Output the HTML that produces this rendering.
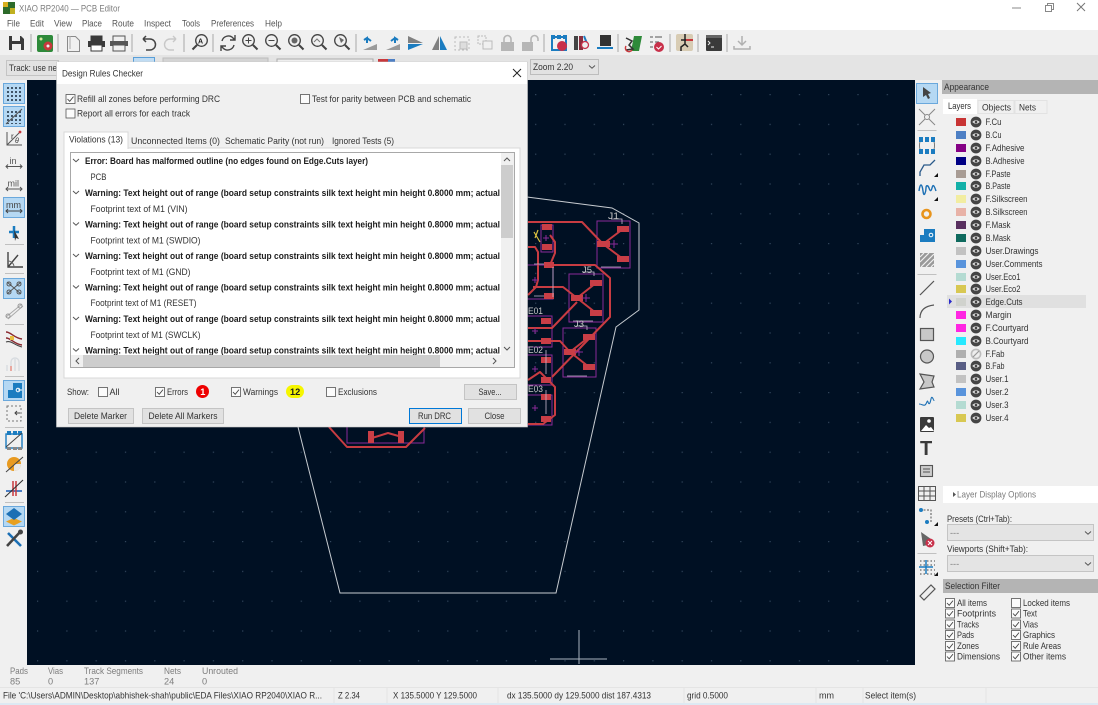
<!DOCTYPE html>
<html><head><meta charset="utf-8"><title>XIAO RP2040 — PCB Editor</title>
<style>
html,body{margin:0;padding:0;width:1098px;height:705px;overflow:hidden;background:#f0f0f0}
svg{display:block;position:absolute;left:0;top:0;filter:blur(.35px)}
text{font-family:"Liberation Sans",sans-serif;font-size:9.2px;fill:#333}
.b{font-weight:bold;fill:#1c1c1c}
.g{fill:#7d7d7d}
.sep{stroke:#a8a8a8;stroke-width:1}
.tr{fill:none;stroke:#c83c42;stroke-width:2;stroke-linejoin:round}
.pad{fill:#c93e46}
.cy{fill:none;stroke:#8a2a9a;stroke-width:1}
.btn{fill:#e1e1e1;stroke:#c4c4c4;stroke-width:1}
</style></head><body>
<svg width="1098" height="705" viewBox="0 0 1098 705" xmlns="http://www.w3.org/2000/svg">
<defs>
<pattern id="grid" x="37" y="94" width="29.3" height="29.8" patternUnits="userSpaceOnUse"><rect x="0" y="0" width="1.2" height="1.2" fill="#34485e"/></pattern>
<pattern id="dots" x="7" y="87" width="4" height="4" patternUnits="userSpaceOnUse"><rect width="2" height="2" fill="#3f5468"/></pattern>
<g id="eye"><circle r="5.4" fill="#454545"/><path d="M-3.8 0Q0-3.4 3.8 0Q0 3.4-3.8 0Z" fill="#e4e4e4"/><circle r="1.3" fill="#454545"/></g>
<g id="cb"><rect x=".5" y=".5" width="9" height="9" fill="#fbfbfb" stroke="#555" stroke-width=".8"/></g>
<g id="cc"><rect x=".5" y=".5" width="9" height="9" fill="#fbfbfb" stroke="#555" stroke-width=".8"/><path d="M2 5l2.2 2.3L8 2.6" fill="none" stroke="#444" stroke-width=".9"/></g>
<g id="mag"><circle cx="-1.5" cy="-1.5" r="5.8" fill="none" stroke="#444" stroke-width="1.3"/><path d="M3 3l4.500 4.500" stroke="#444" stroke-width="2"/></g>
<g id="chev"><path d="M-3-1.500L0 1.200 3-1.500" fill="none" stroke="#555" stroke-width="1"/></g>
<clipPath id="lc"><rect x="71" y="153" width="430" height="202"/></clipPath>
</defs>

<!-- window chrome -->
<rect width="1098" height="30" fill="#fff"/>
<rect y="30" width="1098" height="25" fill="#f0f0f0"/>
<rect y="55" width="1098" height="25" fill="#e4e4e4"/>
<rect x="3" y="2" width="12" height="12" fill="#2d6b2a"/><rect x="3" y="2" width="5" height="5" fill="#d8b020"/><rect x="10" y="8" width="5" height="6" fill="#c0b020"/>
<text x="19" y="11.500" class="g" textLength="101" lengthAdjust="spacingAndGlyphs">XIAO RP2040 — PCB Editor</text>
<path d="M1012 8h9" stroke="#888"/><rect x="1045.500" y="5.500" width="6" height="6" fill="none" stroke="#888"/><path d="M1047.500 5V3.500H1053.500V9.500H1052" fill="none" stroke="#888"/><path d="M1077 3l8 8M1085 3l-8 8" stroke="#777"/>
<text x="7" y="26.500" style="fill:#555" textLength="13" lengthAdjust="spacingAndGlyphs">File</text>
<text x="30" y="26.500" style="fill:#555" textLength="14" lengthAdjust="spacingAndGlyphs">Edit</text>
<text x="54" y="26.500" style="fill:#555" textLength="18" lengthAdjust="spacingAndGlyphs">View</text>
<text x="82" y="26.500" style="fill:#555" textLength="20" lengthAdjust="spacingAndGlyphs">Place</text>
<text x="112" y="26.500" style="fill:#555" textLength="22" lengthAdjust="spacingAndGlyphs">Route</text>
<text x="144" y="26.500" style="fill:#555" textLength="27" lengthAdjust="spacingAndGlyphs">Inspect</text>
<text x="182" y="26.500" style="fill:#555" textLength="18" lengthAdjust="spacingAndGlyphs">Tools</text>
<text x="211" y="26.500" style="fill:#555" textLength="43" lengthAdjust="spacingAndGlyphs">Preferences</text>
<text x="265" y="26.500" style="fill:#555" textLength="17" lengthAdjust="spacingAndGlyphs">Help</text>

<!-- top toolbar -->
<path d="M9 36h12l3 3v11H9z" fill="#3a3a3a"/><rect x="12" y="36" width="8" height="5" fill="#f0f0f0"/><rect x="12" y="44" width="9" height="6" fill="#f0f0f0"/>
<g class="sep"><path d="M31 34v18M58 34v18M132 34v18M184 34v18M213 34v18M356 34v18M544 34v18M618 34v18M670 34v18M698 34v18M727 34v18"/></g>
<rect x="37" y="35" width="16" height="17" rx="2" fill="#2e8a3a"/><circle cx="48" cy="46" r="4.500" fill="#c8383c"/><circle cx="48" cy="46" r="1.500" fill="#eee"/><circle cx="41" cy="39" r="1.500" fill="#d8e8a0"/>
<path d="M67.500 36.500h8l4 4v11h-12z" fill="none" stroke="#8a8a8a"/><path d="M70 36v13" stroke="#aaa"/>
<path d="M91 41v-5h11v5" fill="#3a3a3a" stroke="#3a3a3a"/><rect x="88" y="41" width="17" height="6" fill="#3a3a3a"/><rect x="91" y="45" width="11" height="6" fill="#fff" stroke="#3a3a3a"/>
<path d="M113 41v-5h12v5" fill="none" stroke="#555"/><rect x="110" y="41" width="18" height="5" fill="#555"/><rect x="113" y="45" width="12" height="6" fill="#f0f0f0" stroke="#555"/>
<path d="M143 39h7a4.500 4.500 0 0 1 0 11h-4M143 39l3-3M143 39l3 3" fill="none" stroke="#444" stroke-width="1.500"/>
<path d="M176 39h-6a4.500 4.500 0 0 0 0 11h4M176 39l-3-3M176 39l-3 3" fill="none" stroke="#c8c8c8" stroke-width="1.400"/>
<use href="#mag" transform="translate(200 42) scale(-1 1)"/><text x="198" y="43.500" style="font-size:7px" class="b">A</text>
<path d="M222 41a6.500 6.500 0 0 1 11-3l2 2M234 45a6.500 6.500 0 0 1-11 3l-2-2M235 35v5h-5M221 51v-5h5" fill="none" stroke="#444" stroke-width="1.400"/>
<use href="#mag" transform="translate(250 42)"/><path d="M245.500 40.500h6M248.500 37.500v6" stroke="#444"/>
<use href="#mag" transform="translate(273 42)"/><path d="M268.500 40.500h6" stroke="#444"/>
<use href="#mag" transform="translate(296 42)"/><circle cx="294.500" cy="40.500" r="3" fill="#666"/>
<use href="#mag" transform="translate(319 42)"/><path d="M314 42l3-3 3 3" fill="none" stroke="#777"/>
<use href="#mag" transform="translate(342 42)"/><path d="M339 37l2 6 3-3z" fill="#666"/>
<path d="M363 50l14-6v6z" fill="#9a9a9a"/><path d="M367 43v-5l-3 2M367 38l4 3" fill="none" stroke="#1b7cc0" stroke-width="2"/>
<path d="M386 50l14-6v6z" fill="#9a9a9a"/><path d="M395 43v-5l3 2M395 38l-4 3" fill="none" stroke="#1b7cc0" stroke-width="2"/>
<path d="M408 36l15 7h-15z" fill="#808080"/><path d="M408 44h15l-15 6z" fill="#1b7cc0"/>
<path d="M439 36v14h-7z" fill="#808080"/><path d="M440 36v14h7z" fill="#1b7cc0"/>
<rect x="455" y="37" width="14" height="13" fill="none" stroke="#bbb" stroke-dasharray="2 2"/><rect x="460" y="42" width="7" height="7" fill="#ddd" stroke="#bbb"/>
<rect x="478" y="36" width="8" height="8" fill="none" stroke="#bbb" stroke-dasharray="2 1"/><rect x="483" y="41" width="9" height="8" fill="#f0f0f0" stroke="#bbb"/>
<rect x="501" y="42" width="13" height="9" fill="#b6b6b6"/><path d="M504 42v-3a3.500 3.500 0 0 1 7 0v3" fill="none" stroke="#b6b6b6" stroke-width="1.600"/>
<rect x="522" y="42" width="11" height="9" fill="#b6b6b6"/><path d="M531 42v-3a3.500 3.500 0 0 1 7 0v2" fill="none" stroke="#b6b6b6" stroke-width="1.600"/>
<rect x="552" y="37" width="14" height="13" fill="none" stroke="#1b7cc0" stroke-width="2"/><rect x="551" y="35" width="4" height="4" fill="#1b7cc0"/><rect x="557" y="35" width="4" height="4" fill="#1b7cc0"/><rect x="563" y="35" width="4" height="4" fill="#1b7cc0"/><circle cx="562" cy="46" r="5" fill="#c8304a"/>
<rect x="574" y="36" width="4" height="14" fill="#444"/><rect x="579" y="36" width="4" height="14" fill="#8a3040"/><path d="M584 36l4 10" stroke="#1b7cc0" stroke-width="2"/><circle cx="585" cy="45" r="3.500" fill="#eee" stroke="#c8304a" stroke-width="1.300"/>
<rect x="600" y="35" width="11" height="11" fill="#333"/><rect x="597" y="47" width="16" height="2" fill="#1b7cc0"/>
<path d="M634 36h8l-3 15h-8z" fill="#2e8a3a"/><path d="M626 38l6 3-3 4 4 4-7 1" fill="none" stroke="#333" stroke-width="1.500"/><path d="M626 46a3 3 0 0 0 6 4" fill="none" stroke="#c8383c" stroke-width="1.500"/>
<path d="M650 37h3M650 42h3M650 47h3M655 37h7M655 42h4" stroke="#555"/><circle cx="659" cy="47" r="5" fill="#c8304a"/><path d="M656.500 47l2 2 3-3" fill="none" stroke="#fff"/>
<rect x="676" y="34" width="17" height="17" rx="2" fill="#d8ccb4"/><path d="M685 34v6M681 40h12M685 40v4l-4 3v4M685 44l3 3" stroke="#222" stroke-width="1.500" fill="none"/><path d="M686 40h7" stroke="#c8383c" stroke-width="2"/>
<rect x="706" y="35" width="16" height="16" rx="1" fill="#3a3a3a"/><rect x="706" y="35" width="16" height="3" fill="#666"/><path d="M708 41l2 2-2 2M711 47h3" stroke="#eee" fill="none"/>
<path d="M742 36v9M738 41l4 4 4-4M734 46v3h16v-3" fill="none" stroke="#b0b0b0" stroke-width="1.500"/>

<!-- second toolbar -->
<rect x="6.500" y="60.500" width="52" height="15" fill="#e2e2e2" stroke="#c4c4c4"/>
<text x="9" y="71" textLength="48" lengthAdjust="spacingAndGlyphs">Track: use ne</text>
<rect x="133.500" y="57.500" width="21" height="20" fill="#c0dcf3" stroke="#5a9fd8"/>
<rect x="163" y="58" width="105" height="10" fill="#d4d4d4" stroke="#bdbdbd"/>
<rect x="277" y="59" width="96" height="10" fill="#eee" stroke="#aaa"/>
<rect x="378" y="59" width="10" height="5" fill="#c8383c"/><rect x="388" y="59" width="7" height="5" fill="#4d7fc4"/>
<rect x="530.500" y="59.500" width="68" height="15" fill="#e2e2e2" stroke="#bdbdbd"/>
<text x="533" y="70" textLength="40" lengthAdjust="spacingAndGlyphs">Zoom 2.20</text>
<use href="#chev" transform="translate(592 67)"/>

<!-- canvas -->
<rect x="27" y="80" width="888" height="585" fill="#001023"/>
<rect x="27" y="80" width="888" height="585" fill="url(#grid)"/>
<path d="M527 197L612 208 639 223V310L616 327 556 593H340L298 427" fill="none" stroke="#c6cbd0" stroke-width="1"/>
<path d="M579 630V664M550 659H607" stroke="#aab4bf" stroke-width="1" fill="none"/>

<!-- PCB -->
<g class="cy">
<rect x="597" y="221" width="33" height="47"/><rect x="569" y="274" width="34" height="48"/><rect x="563" y="328" width="33" height="49"/>
<rect x="541" y="225" width="12" height="27"/><rect x="520" y="265" width="33" height="34"/>
<rect x="520" y="316" width="32" height="31"/><rect x="520" y="355" width="32" height="30"/><rect x="520" y="395" width="32" height="30"/>
<path d="M347 427V443H424V427"/>
</g>
<g class="tr">
<path d="M528 222H582L603 244 623 229M603 244L623 259"/>
<path d="M533 287H563L577 298 596 283M577 298L596 313M577 302L552 328H528"/>
<path d="M550 265H595L610 278V317L552 377"/>
<path d="M528 341H560L570 352 589 337M570 352L589 367"/>
<path d="M528 380L540 372 555 387V415L543 424H528"/>
<path d="M528 247H535L538 252V280L536 287 528 295"/><path d="M550 235L555 242V253L550 265"/>
<path d="M329 427L347 447H406L425 428"/><path d="M372 438L388 433 402 437"/>
</g>
<g class="pad">
<rect x="617" y="226" width="12" height="6"/><rect x="617" y="256" width="12" height="6"/><rect x="597" y="241" width="13" height="6"/>
<rect x="590" y="280" width="12" height="6"/><rect x="590" y="310" width="12" height="6"/><rect x="571" y="295" width="12" height="6"/>
<rect x="583" y="334" width="12" height="6"/><rect x="583" y="364" width="12" height="6"/><rect x="564" y="349" width="12" height="6"/>
<rect x="542" y="224" width="10" height="6"/><rect x="542" y="244" width="10" height="6"/><rect x="544" y="262" width="10" height="6"/><rect x="544" y="293" width="10" height="6"/>
<rect x="541" y="318" width="10" height="6"/><rect x="541" y="338" width="10" height="6"/><rect x="541" y="357" width="10" height="6"/><rect x="541" y="377" width="10" height="6"/><rect x="541" y="394" width="10" height="6"/><rect x="541" y="416" width="10" height="6"/>
<rect x="368" y="431" width="6" height="12"/><rect x="398" y="431" width="6" height="12"/>
</g>
<g fill="none" stroke="#c8b8cf" stroke-width=".8">
<path d="M611 219h11v5M583 272h11v4M576 326h11v4M553 267v30M534 264h10M534 296h10M601 267h20M573 321h20M567 376h20M546 350v24M546 390v24"/>
</g>
<path d="M534 232l6 10M538 230l-3 8" stroke="#d8c040" stroke-width="1.200" fill="none"/>
<text x="608" y="219" style="fill:#c8c8c8" textLength="11" lengthAdjust="spacingAndGlyphs">J1</text>
<text x="582" y="273" style="fill:#c8c8c8" textLength="10" lengthAdjust="spacingAndGlyphs">J5</text>
<text x="574" y="327" style="fill:#c8c8c8" textLength="10" lengthAdjust="spacingAndGlyphs">J3</text>
<text x="528" y="314" style="fill:#c8c8c8" textLength="15" lengthAdjust="spacingAndGlyphs">E01</text>
<text x="528" y="353" style="fill:#c8c8c8" textLength="15" lengthAdjust="spacingAndGlyphs">E02</text>
<text x="528" y="392" style="fill:#c8c8c8" textLength="15" lengthAdjust="spacingAndGlyphs">E03</text>
<g stroke="#8a2a9a" fill="none"><path d="M610 244h8M614 240v8M582 298h8M586 294v8M575 352h8M579 348v8M532 408h6M535 405v6M532 369h6M535 366v6M532 331h6M535 328v6M532 280h6M535 277v6M543 238h6M546 235v6"/></g>

<!-- dialog -->
<rect x="56.500" y="62" width="471" height="365" fill="#f0f0f0" stroke="#c8c8c8" stroke-width=".6"/>
<rect x="57" y="62" width="470" height="22" fill="#fff"/>
<text x="62" y="76.500" textLength="81" lengthAdjust="spacingAndGlyphs">Design Rules Checker</text>
<path d="M513 69l8 8M521 69l-8 8" stroke="#222" stroke-width="1"/>
<use href="#cc" x="65.500" y="94"/><text x="77" y="102" textLength="143" lengthAdjust="spacingAndGlyphs">Refill all zones before performing DRC</text>
<use href="#cb" x="65.500" y="108.500"/><text x="77" y="116.500" textLength="113" lengthAdjust="spacingAndGlyphs">Report all errors for each track</text>
<use href="#cb" x="300" y="94"/><text x="312" y="102" textLength="159" lengthAdjust="spacingAndGlyphs">Test for parity between PCB and schematic</text>

<rect x="64" y="148" width="456" height="230" fill="#fff" stroke="#d9d9d9"/>
<rect x="64" y="132" width="64" height="17" fill="#fff"/><path d="M64 149V132H128V149" fill="none" stroke="#d9d9d9"/>
<text x="69" y="142.500" textLength="54" lengthAdjust="spacingAndGlyphs">Violations (13)</text>
<text x="131" y="144" textLength="74" lengthAdjust="spacingAndGlyphs" style="display:none"></text>
<text x="131" y="144" textLength="89" lengthAdjust="spacingAndGlyphs">Unconnected Items (0)</text>
<text x="225" y="144" textLength="99" lengthAdjust="spacingAndGlyphs">Schematic Parity (not run)</text>
<text x="332" y="144" textLength="62" lengthAdjust="spacingAndGlyphs">Ignored Tests (5)</text>

<rect x="70.500" y="152.500" width="444" height="215" fill="#fff" stroke="#a8a8a8"/>
<g clip-path="url(#lc)">
<text x="85" y="164" class="b" textLength="283" lengthAdjust="spacingAndGlyphs">Error: Board has malformed outline (no edges found on Edge.Cuts layer)</text>
<text x="90.500" y="180" textLength="16" lengthAdjust="spacingAndGlyphs">PCB</text>
<text x="85" y="196" class="b" textLength="415" lengthAdjust="spacingAndGlyphs">Warning: Text height out of range (board setup constraints silk text height min height 0.8000 mm; actual</text>
<text x="90.500" y="212" textLength="97" lengthAdjust="spacingAndGlyphs">Footprint text of M1 (VIN)</text>
<text x="85" y="227.500" class="b" textLength="415" lengthAdjust="spacingAndGlyphs">Warning: Text height out of range (board setup constraints silk text height min height 0.8000 mm; actual</text>
<text x="90.500" y="243.500" textLength="110" lengthAdjust="spacingAndGlyphs">Footprint text of M1 (SWDIO)</text>
<text x="85" y="259" class="b" textLength="415" lengthAdjust="spacingAndGlyphs">Warning: Text height out of range (board setup constraints silk text height min height 0.8000 mm; actual</text>
<text x="90.500" y="275" textLength="100" lengthAdjust="spacingAndGlyphs">Footprint text of M1 (GND)</text>
<text x="85" y="290.500" class="b" textLength="415" lengthAdjust="spacingAndGlyphs">Warning: Text height out of range (board setup constraints silk text height min height 0.8000 mm; actual</text>
<text x="90.500" y="306" textLength="106" lengthAdjust="spacingAndGlyphs">Footprint text of M1 (RESET)</text>
<text x="85" y="322" class="b" textLength="415" lengthAdjust="spacingAndGlyphs">Warning: Text height out of range (board setup constraints silk text height min height 0.8000 mm; actual</text>
<text x="90.500" y="338" textLength="110" lengthAdjust="spacingAndGlyphs">Footprint text of M1 (SWCLK)</text>
<text x="85" y="353.500" class="b" textLength="415" lengthAdjust="spacingAndGlyphs">Warning: Text height out of range (board setup constraints silk text height min height 0.8000 mm; actual</text>
</g>
<use href="#chev" x="76" y="160.500"/><use href="#chev" x="76" y="192.500"/><use href="#chev" x="76" y="224"/><use href="#chev" x="76" y="255.500"/><use href="#chev" x="76" y="287"/><use href="#chev" x="76" y="318.500"/><use href="#chev" x="76" y="350"/>
<rect x="501" y="153" width="13" height="202" fill="#f0f0f0"/><rect x="501" y="165" width="12" height="73" fill="#cdcdcd"/>
<path d="M504 161l3-3 3 3" fill="none" stroke="#555"/><path d="M504 347l3 3 3-3" fill="none" stroke="#555"/>
<rect x="71" y="355" width="443" height="12" fill="#f0f0f0"/><rect x="83" y="355" width="357" height="12" fill="#cdcdcd"/>
<path d="M79 358l-3 3 3 3" fill="none" stroke="#555"/><path d="M493 358l3 3-3 3" fill="none" stroke="#555"/>

<text x="67" y="395" textLength="22" lengthAdjust="spacingAndGlyphs">Show:</text>
<use href="#cb" x="98" y="387"/><text x="109.500" y="395" textLength="10" lengthAdjust="spacingAndGlyphs">All</text>
<use href="#cc" x="155" y="387"/><text x="167" y="395" textLength="21" lengthAdjust="spacingAndGlyphs">Errors</text>
<circle cx="202.500" cy="391.500" r="6.500" fill="#ee0000"/><text x="200.300" y="395" class="b" style="fill:#fff">1</text>
<use href="#cc" x="231" y="387"/><text x="243" y="395" textLength="35" lengthAdjust="spacingAndGlyphs">Warnings</text>
<rect x="286" y="385" width="18" height="13" rx="6.500" fill="#f6f600"/><text x="290" y="395" class="b">12</text>
<use href="#cb" x="326" y="387"/><text x="338" y="395" textLength="39" lengthAdjust="spacingAndGlyphs">Exclusions</text>
<rect class="btn" x="464.500" y="384.500" width="52" height="15"/><text x="478.500" y="395" textLength="23" lengthAdjust="spacingAndGlyphs">Save...</text>
<rect class="btn" x="68.500" y="408.500" width="65" height="15"/><text x="74" y="419" textLength="53" lengthAdjust="spacingAndGlyphs">Delete Marker</text>
<rect class="btn" x="142.500" y="408.500" width="81" height="15"/><text x="148.500" y="419" textLength="69" lengthAdjust="spacingAndGlyphs">Delete All Markers</text>
<rect x="409.500" y="408.500" width="52" height="15" fill="#e1e1e1" stroke="#0078d7"/><text x="418" y="419" textLength="33" lengthAdjust="spacingAndGlyphs">Run DRC</text>
<rect class="btn" x="468.500" y="408.500" width="52" height="15"/><text x="484.500" y="419" textLength="20" lengthAdjust="spacingAndGlyphs">Close</text>

<!-- left toolbar -->
<g fill="#b5d8f3" stroke="#6aa8dc">
<rect x="3.500" y="83.500" width="21" height="20"/><rect x="3.500" y="106.500" width="21" height="20"/><rect x="3.500" y="197.500" width="21" height="20"/><rect x="3.500" y="278.500" width="21" height="20"/><rect x="3.500" y="380.500" width="21" height="20"/><rect x="3.500" y="506.500" width="21" height="20"/>
</g>
<rect x="7" y="87" width="14" height="14" fill="url(#dots)"/>
<rect x="7" y="110" width="14" height="14" fill="url(#dots)"/>
<path d="M6 124l16-15" stroke="#555" stroke-width="1.100"/>
<path d="M7 132v13h15M7 145l13-13" fill="none" stroke="#555" stroke-width="1"/><text x="11" y="139" style="font-size:8px">r</text><text x="15" y="143" style="font-size:7px;font-style:italic">θ</text><circle cx="20" cy="132" r="1.400" fill="#c8383c"/>
<text x="9.500" y="164" style="font-size:9px;fill:#555">in</text><path d="M6 166.500h16M8 164.500l-2 2 2 2M20 164.500l2 2-2 2" fill="none" stroke="#555"/>
<text x="7.500" y="186.500" style="font-size:9px;fill:#555">mil</text><path d="M6 189h16M8 187l-2 2 2 2M20 187l2 2-2 2" fill="none" stroke="#555"/>
<text x="6" y="208" style="font-size:9px;fill:#444">mm</text><path d="M6 211h16M8 209l-2 2 2 2M20 209l2 2-2 2" fill="none" stroke="#444"/>
<path d="M9 232h10M14 226v12" stroke="#1b7cc0" stroke-width="2.500"/><path d="M14 230l5 9-3-1-1 3z" fill="#333"/>
<path d="M5 244.500h19" stroke="#c0c0c0"/>
<path d="M8 252v15h15M8 267l10-12" fill="none" stroke="#444" stroke-width="1.400"/><path d="M8 261a6 6 0 0 1 6 6" fill="none" stroke="#666"/>
<path d="M5 273.500h19" stroke="#c0c0c0"/>
<path d="M7 282l14 12M21 282L7 294" stroke="#555"/><circle cx="9" cy="284" r="2" fill="none" stroke="#555"/><circle cx="19" cy="284" r="2" fill="none" stroke="#555"/><circle cx="9" cy="292" r="2" fill="none" stroke="#555"/><circle cx="19" cy="292" r="2" fill="none" stroke="#555"/>
<path d="M6 317l16-13M8 319l15-13" stroke="#aaa"/><circle cx="8" cy="316" r="2" fill="none" stroke="#999"/><circle cx="20" cy="306" r="2" fill="none" stroke="#999"/>
<path d="M5 324.500h19" stroke="#c0c0c0"/>
<path d="M6 332c5 0 8 6 16 7M6 338c5 0 8 6 16 7" fill="none" stroke="#8a2a30" stroke-width="1.400"/><path d="M6 342c5-2 8 3 16 5" fill="none" stroke="#444" stroke-width="1.100"/><rect x="10" y="336" width="4" height="4" fill="#e8c040"/>
<path d="M11 371v-9a4 4 0 0 1 8 0v9M15 371v-12M7 371v-6" fill="none" stroke="#d8dce0" stroke-width="1.400"/><path d="M11 371v-5" stroke="#e8a8a0" stroke-width="2"/>
<path d="M5 376.500h19" stroke="#c0c0c0"/>
<path d="M8 398v-8h5v-7h9v15z" fill="#1b7cc0"/><circle cx="18" cy="390" r="1.800" fill="none" stroke="#fff"/><path d="M18 390h4" stroke="#fff"/>
<rect x="7" y="406" width="14" height="15" fill="none" stroke="#777" stroke-dasharray="2 2"/><path d="M15 413h5M17 411l-2 2 2 2" stroke="#444" fill="none"/>
<path d="M5 427.500h19" stroke="#c0c0c0"/>
<rect x="6" y="434" width="16" height="14" fill="none" stroke="#1b7cc0" stroke-width="1.400"/><rect x="7" y="431" width="4" height="4" fill="#1b7cc0"/><rect x="13" y="431" width="4" height="4" fill="#1b7cc0"/><rect x="18" y="431" width="4" height="4" fill="#1b7cc0"/><rect x="7" y="447" width="4" height="3" fill="#888"/><rect x="13" y="447" width="4" height="3" fill="#888"/><rect x="18" y="447" width="4" height="3" fill="#888"/><path d="M6 447l16-14" stroke="#444"/>
<circle cx="14" cy="464" r="7" fill="#e89a20"/><path d="M14 464h7a7 7 0 0 1-7 7z" fill="#e8e8e8"/><path d="M6 472l17-15" stroke="#444"/>
<path d="M6 491h16" stroke="#4d7fc4" stroke-width="2"/><path d="M13 481v15M16 481v15" stroke="#c8383c" stroke-width="1.500"/><path d="M5 497l18-17" stroke="#333" stroke-width="1.100"/>
<path d="M5 502.500h19" stroke="#c0c0c0"/>
<path d="M14 518l8 3.500-8 4-8-4z" fill="#e8a020"/><path d="M14 508l8 6-8 6-8-6z" fill="#1b6fb4"/>
<path d="M8 533l13 13" stroke="#1b6fb4" stroke-width="2.600"/><path d="M21 531l-14 15" stroke="#444" stroke-width="2.600"/><circle cx="20.500" cy="532" r="2.500" fill="#444"/>

<!-- right toolbar -->
<rect x="916.500" y="83.500" width="21" height="20" fill="#b5d8f3" stroke="#6aa8dc"/>
<path d="M923 87l8 6-3 1 2 4-2 1-2-4-3 2z" fill="#444"/>
<path d="M919 109l16 16M935 109l-16 16" stroke="#888" stroke-width="1"/><circle cx="927" cy="117" r="2.500" fill="#f0f0f0" stroke="#888"/>
<path d="M917.500 130.500h19" stroke="#c0c0c0"/>
<path d="M921 141c-2 0-2 9 0 9M933 141c2 0 2 9 0 9" fill="none" stroke="#777"/><g fill="#1b7cc0"><rect x="919" y="137" width="4" height="5"/><rect x="925" y="137" width="4" height="5"/><rect x="931" y="137" width="4" height="5"/><rect x="919" y="149" width="4" height="5"/><rect x="925" y="149" width="4" height="5"/><rect x="931" y="149" width="4" height="5"/></g>
<path d="M920 176v-4l4-7h6l5-5" fill="none" stroke="#2a5a8a" stroke-width="1.300"/><path d="M938 177v-4l-4 4z" fill="#111"/>
<path d="M919 191c1-8 3-8 4 0s3 0 3-3 2-3 3 0 2 4 3 0 2-3 4 3" fill="none" stroke="#1b6fb4" stroke-width="1.400"/><path d="M938 201v-4l-4 4z" fill="#111"/>
<circle cx="926.500" cy="214" r="4" fill="none" stroke="#e8941c" stroke-width="2.600"/>
<path d="M920 242v-7h4v-6h11v13z" fill="#1b7cc0"/><circle cx="931" cy="235" r="1.800" fill="none" stroke="#fff"/>
<rect x="920" y="253" width="14" height="14" fill="#999"/><path d="M920 257l4-4M920 262l9-9M921 267l13-13M926 267l8-8M931 267l3-3" stroke="#f0f0f0" stroke-width="1.200"/>
<path d="M917.500 274.500h19" stroke="#c0c0c0"/>
<path d="M920 295l14-14" stroke="#555" stroke-width="1.200"/>
<path d="M920 318c0-8 5-12 14-13" fill="none" stroke="#555" stroke-width="1.200"/>
<rect x="920.500" y="328.500" width="13" height="12" fill="#c8c8c8" stroke="#555" stroke-width="1.200"/>
<circle cx="927" cy="356.500" r="6.500" fill="#c8c8c8" stroke="#555" stroke-width="1.200"/>
<path d="M920 374l14 2-2 6 2 5-14 2 4-7z" fill="#c8c8c8" stroke="#555" stroke-width="1.200"/>
<path d="M919 404c3 0 4 2 6 1s2-6 3-3 2 2 3-3 3 3 3 1" fill="none" stroke="#1b6fb4" stroke-width="1.100"/>
<rect x="920" y="417" width="14" height="15" rx="1" fill="#3a3a3a"/><circle cx="929" cy="421" r="1.800" fill="#fff"/><path d="M921 431l5-6 3 3 2-1 3 4z" fill="#fff"/>
<text x="920" y="455" style="font-size:20px;fill:#3a3a3a;font-weight:bold">T</text>
<rect x="920.500" y="465.500" width="12" height="11" fill="#ccc" stroke="#555" stroke-width="1.100"/><path d="M923 469h7M923 472h7" stroke="#555"/>
<path d="M918.500 486.500h17v14h-17zM918.500 491h17M918.500 496h17M924 486v15M930 486v15" fill="none" stroke="#555"/>
<path d="M920 510h11v12" fill="none" stroke="#555" stroke-dasharray="2 1.500"/><circle cx="921" cy="510" r="2" fill="#1b7cc0"/><circle cx="927" cy="522" r="2" fill="#1b7cc0"/><path d="M938 526v-4l-4 4z" fill="#111"/>
<path d="M921 532l10 7-4 1 1 5-5 1z" fill="#666"/><circle cx="930" cy="543" r="4.500" fill="#c8304a"/><path d="M928 541l4 4M932 541l-4 4" stroke="#fff"/>
<path d="M917.500 553.500h19" stroke="#c0c0c0"/>
<path d="M920 561h15M920 565h15M920 570h15M920 574h15" stroke="#444" stroke-dasharray="1.500 2"/><path d="M919 567h14M926 560v14" stroke="#1b7cc0" stroke-width="1.500"/><path d="M938 576v-4l-4 4z" fill="#111"/>
<path d="M920 596l11-11 4 4-11 11z" fill="#eee" stroke="#555" stroke-width="1.200"/>

<!-- appearance panel -->
<rect x="942" y="80" width="156" height="14" fill="#b4b4b4"/>
<text x="944" y="90" textLength="45" lengthAdjust="spacingAndGlyphs">Appearance</text>
<rect x="943" y="99" width="34" height="15" fill="#fff"/>
<rect x="978" y="100.500" width="36" height="13" fill="#f0f0f0" stroke="#e2e2e2"/><rect x="1015" y="100.500" width="32" height="13" fill="#f0f0f0" stroke="#e2e2e2"/>
<text x="948" y="109" textLength="23" lengthAdjust="spacingAndGlyphs">Layers</text>
<text x="982" y="110.500" textLength="29" lengthAdjust="spacingAndGlyphs">Objects</text>
<text x="1019" y="110.500" textLength="17" lengthAdjust="spacingAndGlyphs">Nets</text>
<rect x="947" y="295" width="139" height="13" fill="#e0e0e0"/>
<path d="M949 298.500l3 3-3 3z" fill="#2a2acc"/>

<rect x="956" y="118" width="10" height="8" fill="#c83434"/><use href="#eye" x="976" y="122"/><text x="985.500" y="125" textLength="16" lengthAdjust="spacingAndGlyphs">F.Cu</text>
<rect x="956" y="131" width="10" height="8" fill="#4d7fc4"/><use href="#eye" x="976" y="135"/><text x="985.500" y="138" textLength="16" lengthAdjust="spacingAndGlyphs">B.Cu</text>
<rect x="956" y="144" width="10" height="8" fill="#840084"/><use href="#eye" x="976" y="148"/><text x="985.500" y="151" textLength="39" lengthAdjust="spacingAndGlyphs">F.Adhesive</text>
<rect x="956" y="157" width="10" height="8" fill="#000084"/><use href="#eye" x="976" y="161"/><text x="985.500" y="164" textLength="39" lengthAdjust="spacingAndGlyphs">B.Adhesive</text>
<rect x="956" y="170" width="10" height="8" fill="#a89c94"/><use href="#eye" x="976" y="174"/><text x="985.500" y="177" textLength="25" lengthAdjust="spacingAndGlyphs">F.Paste</text>
<rect x="956" y="182" width="10" height="8" fill="#13b0a8"/><use href="#eye" x="976" y="186"/><text x="985.500" y="189" textLength="25" lengthAdjust="spacingAndGlyphs">B.Paste</text>
<rect x="956" y="195" width="10" height="8" fill="#f2eda1"/><use href="#eye" x="976" y="199"/><text x="985.500" y="202" textLength="42" lengthAdjust="spacingAndGlyphs">F.Silkscreen</text>
<rect x="956" y="208" width="10" height="8" fill="#e8b2a7"/><use href="#eye" x="976" y="212"/><text x="985.500" y="215" textLength="42" lengthAdjust="spacingAndGlyphs">B.Silkscreen</text>
<rect x="956" y="221" width="10" height="8" fill="#59305f"/><use href="#eye" x="976" y="225"/><text x="985.500" y="228" textLength="25" lengthAdjust="spacingAndGlyphs">F.Mask</text>
<rect x="956" y="234" width="10" height="8" fill="#0f6a5e"/><use href="#eye" x="976" y="238"/><text x="985.500" y="241" textLength="25" lengthAdjust="spacingAndGlyphs">B.Mask</text>
<rect x="956" y="247" width="10" height="8" fill="#c2c2c2"/><use href="#eye" x="976" y="251"/><text x="985.500" y="254" textLength="53" lengthAdjust="spacingAndGlyphs">User.Drawings</text>
<rect x="956" y="260" width="10" height="8" fill="#5994dc"/><use href="#eye" x="976" y="264"/><text x="985.500" y="267" textLength="57" lengthAdjust="spacingAndGlyphs">User.Comments</text>
<rect x="956" y="273" width="10" height="8" fill="#b4dbd2"/><use href="#eye" x="976" y="277"/><text x="985.500" y="280" textLength="35" lengthAdjust="spacingAndGlyphs">User.Eco1</text>
<rect x="956" y="285" width="10" height="8" fill="#d8c852"/><use href="#eye" x="976" y="289"/><text x="985.500" y="292" textLength="35" lengthAdjust="spacingAndGlyphs">User.Eco2</text>
<rect x="956" y="298" width="10" height="8" fill="#d0d2cd"/><use href="#eye" x="976" y="302"/><text x="985.500" y="305" textLength="37" lengthAdjust="spacingAndGlyphs">Edge.Cuts</text>
<rect x="956" y="311" width="10" height="8" fill="#ff26e2"/><use href="#eye" x="976" y="315"/><text x="985.500" y="318" textLength="26" lengthAdjust="spacingAndGlyphs">Margin</text>
<rect x="956" y="324" width="10" height="8" fill="#ff26e2"/><use href="#eye" x="976" y="328"/><text x="985.500" y="331" textLength="43" lengthAdjust="spacingAndGlyphs">F.Courtyard</text>
<rect x="956" y="337" width="10" height="8" fill="#26e9ff"/><use href="#eye" x="976" y="341"/><text x="985.500" y="344" textLength="43" lengthAdjust="spacingAndGlyphs">B.Courtyard</text>
<rect x="956" y="350" width="10" height="8" fill="#afafaf"/><circle cx="976" cy="354" r="5.400" fill="#bdbdbd"/><circle cx="976" cy="354" r="3.800" fill="#eee"/><path d="M973 357l6-6" stroke="#999" stroke-width="1.200"/><text x="985.500" y="357" textLength="19" lengthAdjust="spacingAndGlyphs">F.Fab</text>
<rect x="956" y="362" width="10" height="8" fill="#585d84"/><use href="#eye" x="976" y="366"/><text x="985.500" y="369" textLength="19" lengthAdjust="spacingAndGlyphs">B.Fab</text>
<rect x="956" y="375" width="10" height="8" fill="#c2c2c2"/><use href="#eye" x="976" y="379"/><text x="985.500" y="382" textLength="23" lengthAdjust="spacingAndGlyphs">User.1</text>
<rect x="956" y="388" width="10" height="8" fill="#5994dc"/><use href="#eye" x="976" y="392"/><text x="985.500" y="395" textLength="23" lengthAdjust="spacingAndGlyphs">User.2</text>
<rect x="956" y="401" width="10" height="8" fill="#b4dbd2"/><use href="#eye" x="976" y="405"/><text x="985.500" y="408" textLength="23" lengthAdjust="spacingAndGlyphs">User.3</text>
<rect x="956" y="414" width="10" height="8" fill="#d8c852"/><use href="#eye" x="976" y="418"/><text x="985.500" y="421" textLength="23" lengthAdjust="spacingAndGlyphs">User.4</text>

<rect x="943" y="486" width="155" height="17" fill="#fff"/>
<path d="M953 492l3 2.500-3 2.500z" fill="#555"/>
<text x="957" y="497.500" class="g" textLength="79" lengthAdjust="spacingAndGlyphs">Layer Display Options</text>
<text x="947" y="522" textLength="65" lengthAdjust="spacingAndGlyphs">Presets (Ctrl+Tab):</text>
<rect x="947.500" y="524.500" width="146" height="16" fill="#e4e4e4" stroke="#c4c4c4"/>
<text x="950" y="536" class="g">---</text><use href="#chev" x="1088" y="533"/>
<text x="947" y="552" textLength="81" lengthAdjust="spacingAndGlyphs">Viewports (Shift+Tab):</text>
<rect x="947.500" y="555.500" width="146" height="16" fill="#e4e4e4" stroke="#c4c4c4"/>
<text x="950" y="567" class="g">---</text><use href="#chev" x="1088" y="564"/>
<rect x="943" y="579" width="155" height="14" fill="#b4b4b4"/>
<text x="945" y="589" textLength="55" lengthAdjust="spacingAndGlyphs">Selection Filter</text>

<use href="#cc" x="945" y="598"/><text x="957" y="606" textLength="30" lengthAdjust="spacingAndGlyphs">All items</text>
<use href="#cc" x="945" y="608.500"/><text x="957" y="616.500" textLength="39" lengthAdjust="spacingAndGlyphs">Footprints</text>
<use href="#cc" x="945" y="619.500"/><text x="957" y="627.500" textLength="22" lengthAdjust="spacingAndGlyphs">Tracks</text>
<use href="#cc" x="945" y="630"/><text x="957" y="638" textLength="17" lengthAdjust="spacingAndGlyphs">Pads</text>
<use href="#cc" x="945" y="641"/><text x="957" y="649" textLength="22" lengthAdjust="spacingAndGlyphs">Zones</text>
<use href="#cc" x="945" y="651.500"/><text x="957" y="659.500" textLength="43" lengthAdjust="spacingAndGlyphs">Dimensions</text>
<use href="#cb" x="1011" y="598"/><text x="1023" y="606" textLength="47" lengthAdjust="spacingAndGlyphs">Locked items</text>
<use href="#cc" x="1011" y="608.500"/><text x="1023" y="616.500" textLength="14" lengthAdjust="spacingAndGlyphs">Text</text>
<use href="#cc" x="1011" y="619.500"/><text x="1023" y="627.500" textLength="15" lengthAdjust="spacingAndGlyphs">Vias</text>
<use href="#cc" x="1011" y="630"/><text x="1023" y="638" textLength="32" lengthAdjust="spacingAndGlyphs">Graphics</text>
<use href="#cc" x="1011" y="641"/><text x="1023" y="649" textLength="38" lengthAdjust="spacingAndGlyphs">Rule Areas</text>
<use href="#cc" x="1011" y="651.500"/><text x="1023" y="659.500" textLength="43" lengthAdjust="spacingAndGlyphs">Other items</text>

<!-- messages -->
<text x="10" y="674" class="g" textLength="18" lengthAdjust="spacingAndGlyphs">Pads</text><text x="10" y="684.500" class="g">85</text>
<text x="48" y="674" class="g" textLength="15" lengthAdjust="spacingAndGlyphs">Vias</text><text x="48" y="684.500" class="g">0</text>
<text x="84" y="674" class="g" textLength="59" lengthAdjust="spacingAndGlyphs">Track Segments</text><text x="84" y="684.500" class="g">137</text>
<text x="164" y="674" class="g" textLength="17" lengthAdjust="spacingAndGlyphs">Nets</text><text x="164" y="684.500" class="g">24</text>
<text x="202" y="674" class="g" textLength="36" lengthAdjust="spacingAndGlyphs">Unrouted</text><text x="202" y="684.500" class="g">0</text>
<!-- status bar -->
<path d="M0 687.500H1098" stroke="#e4e4e4"/>
<path d="M334 688v15M387 688v15M498 688v15M684 688v15M816 688v15M863 688v15M986 688v15" stroke="#e4e4e4"/>
<text x="3" y="698.500" textLength="319" lengthAdjust="spacingAndGlyphs">File 'C:\Users\ADMIN\Desktop\abhishek-shah\public\EDA Files\XIAO RP2040\XIAO R...</text>
<text x="338" y="698.500" textLength="22" lengthAdjust="spacingAndGlyphs">Z 2.34</text>
<text x="393" y="698.500" textLength="84" lengthAdjust="spacingAndGlyphs">X 135.5000  Y 129.5000</text>
<text x="507" y="698.500" textLength="144" lengthAdjust="spacingAndGlyphs">dx 135.5000  dy 129.5000  dist 187.4313</text>
<text x="687" y="698.500" textLength="41" lengthAdjust="spacingAndGlyphs">grid 0.5000</text>
<text x="819" y="698.500" textLength="15" lengthAdjust="spacingAndGlyphs">mm</text>
<text x="865" y="698.500" textLength="51" lengthAdjust="spacingAndGlyphs">Select item(s)</text>
<rect y="703" width="1098" height="2" fill="#dde9f3"/>
</svg>
</body></html>
